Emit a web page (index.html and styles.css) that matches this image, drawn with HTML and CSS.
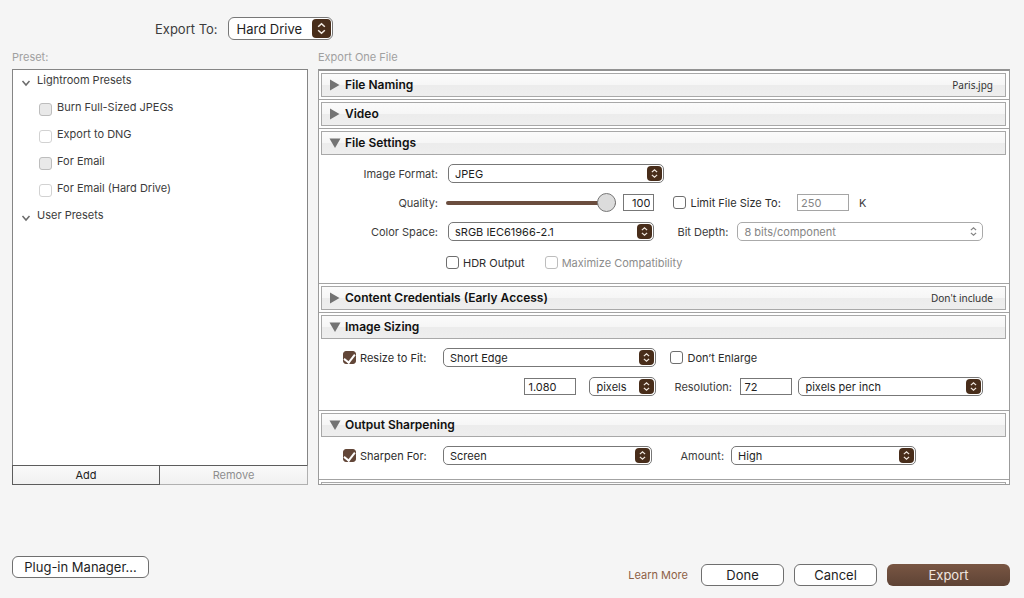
FILE: index.html
```html
<!DOCTYPE html>
<html lang="en">
<head>
<meta charset="utf-8">
<meta name="viewport" content="width=device-width, initial-scale=1">
<title>Export</title>
<link rel="stylesheet" href="styles.css">
</head>
<body>
<svg class="defs" aria-hidden="true">
  <symbol id="updown" viewBox="0 0 16 16"><path d="M5.200 6.500 8 4 10.800 6.500M5.200 9.500 8 12 10.800 9.500"/></symbol>
  <symbol id="closed" viewBox="0 0 12 12"><path d="M1 .5 10.500 6 1 11.500Z"/></symbol>
  <symbol id="open" viewBox="0 0 12 12"><path d="M.5 1.500H11.500L6 11Z"/></symbol>
  <symbol id="chevron" viewBox="0 0 10 8"><path d="M1.500 2 5 6 8.500 2"/></symbol>
</svg>
<form class="dialog">
  <div class="destination">
    <label for="export-to">Export To:</label>
    <span class="select large"><select id="export-to"><option>Hard Drive</option></select><svg><use href="#updown"/></svg></span>
  </div>

  <main class="columns">
    <section class="presets">
      <h2 class="caption">Preset:</h2>
      <div class="preset-box">
        <ul class="tree">
          <li><button type="button" class="group"><svg><use href="#chevron"/></svg>Lightroom Presets</button></li>
          <li class="preset"><input type="checkbox" id="burn" disabled><label for="burn">Burn Full-Sized JPEGs</label></li>
          <li class="preset"><input type="checkbox" id="dng"><label for="dng">Export to DNG</label></li>
          <li class="preset"><input type="checkbox" id="email" disabled><label for="email">For Email</label></li>
          <li class="preset"><input type="checkbox" id="email-hd"><label for="email-hd">For Email (Hard Drive)</label></li>
          <li><button type="button" class="group"><svg><use href="#chevron"/></svg>User Presets</button></li>
        </ul>
        <div class="preset-actions">
          <button type="button">Add</button>
          <button type="button" disabled>Remove</button>
        </div>
      </div>
    </section>

    <section class="settings">
      <h2 class="caption">Export One File</h2>
      <div class="panel">
        <section class="group-panel">
          <button type="button" class="heading"><svg><use href="#closed"/></svg><b>File Naming</b><span class="summary">Paris.jpg</span></button>
        </section>
        <section class="group-panel">
          <button type="button" class="heading"><svg><use href="#closed"/></svg><b>Video</b></button>
        </section>
        <section class="group-panel">
          <button type="button" class="heading"><svg><use href="#open"/></svg><b>File Settings</b></button>
          <div class="body file-settings">
            <div class="row">
              <div class="cell">
                <label class="name" for="format">Image Format:</label>
                <span class="select fill"><select id="format"><option>JPEG</option></select><svg><use href="#updown"/></svg></span>
              </div>
            </div>
            <div class="row">
              <div class="cell quality">
                <label class="name" for="quality">Quality:</label>
                <input type="range" id="quality" min="0" max="100" value="100">
                <input type="text" class="number" aria-label="Quality value" value="100">
              </div>
              <div class="cell">
                <span class="check"><input type="checkbox" id="limit"><label for="limit">Limit File Size To:</label></span>
                <input type="text" class="field limit-size" aria-label="Maximum file size" value="250" disabled>
                <span class="unit">K</span>
              </div>
            </div>
            <div class="row">
              <div class="cell inset">
                <label class="name" for="space">Color Space:</label>
                <span class="select fill"><select id="space"><option>sRGB IEC61966-2.1</option></select><svg><use href="#updown"/></svg></span>
              </div>
              <div class="cell">
                <label class="side-name" for="depth">Bit Depth:</label>
                <span class="select fill off"><select id="depth" disabled><option>8 bits/component</option></select><svg><use href="#updown"/></svg></span>
              </div>
            </div>
            <div class="row flags">
              <span class="check"><input type="checkbox" id="hdr"><label for="hdr">HDR Output</label></span>
              <span class="check"><input type="checkbox" id="compat" disabled><label for="compat">Maximize Compatibility</label></span>
            </div>
          </div>
        </section>
        <section class="group-panel">
          <button type="button" class="heading"><svg><use href="#closed"/></svg><b>Content Credentials (Early Access)</b><span class="summary">Don't include</span></button>
        </section>
        <section class="group-panel">
          <button type="button" class="heading"><svg><use href="#open"/></svg><b>Image Sizing</b></button>
          <div class="body sizing">
            <div class="row">
              <div class="cell">
                <span class="check lead"><input type="checkbox" id="resize" checked><label for="resize">Resize to Fit:</label></span>
                <span class="select fill"><select aria-label="Resize mode"><option>Short Edge</option></select><svg><use href="#updown"/></svg></span>
              </div>
              <div class="cell">
                <span class="check"><input type="checkbox" id="enlarge"><label for="enlarge">Don’t Enlarge</label></span>
              </div>
            </div>
            <div class="row">
              <div class="cell dimension">
                <input type="text" class="field" aria-label="Edge length" value="1.080">
                <span class="select units"><select aria-label="Edge units"><option>pixels</option></select><svg><use href="#updown"/></svg></span>
              </div>
              <div class="cell resolution">
                <label class="side-name" for="resolution">Resolution:</label>
                <input type="text" class="field" id="resolution" value="72">
                <span class="select fill"><select aria-label="Resolution units"><option>pixels per inch</option></select><svg><use href="#updown"/></svg></span>
              </div>
            </div>
          </div>
        </section>
        <section class="group-panel">
          <button type="button" class="heading"><svg><use href="#open"/></svg><b>Output Sharpening</b></button>
          <div class="body sizing">
            <div class="row">
              <div class="cell sharpen">
                <span class="check lead"><input type="checkbox" id="sharpen" checked><label for="sharpen">Sharpen For:</label></span>
                <span class="select fill"><select aria-label="Sharpen for"><option>Screen</option></select><svg><use href="#updown"/></svg></span>
              </div>
              <div class="cell amount">
                <label for="amount">Amount:</label>
                <span class="select fill"><select id="amount"><option>High</option></select><svg><use href="#updown"/></svg></span>
              </div>
            </div>
          </div>
        </section>
        <section class="group-panel">
          <button type="button" class="heading" aria-label="More settings"></button>
        </section>
      </div>
    </section>
  </main>

  <footer class="footer">
    <button type="button" class="push plugin">Plug-in Manager...</button>
    <div class="actions">
      <a href="#learn">Learn More</a>
      <button type="button" class="push">Done</button>
      <button type="button" class="push">Cancel</button>
      <button type="submit" class="push primary">Export</button>
    </div>
  </footer>
</form>
</body>
</html>
```
FILE: styles.css
```css
* { box-sizing: border-box; }

body {
  margin: 0;
  background: #f5f5f5;
  color: #3c3c3c;
  font: 11px/16px Inter, "Liberation Sans", sans-serif;
}

button, input, select { font: inherit; color: inherit; margin: 0; }
.defs { position: absolute; width: 0; height: 0; }

.dialog {
  display: flex;
  flex-direction: column;
  min-height: 100vh;
  padding: 17px 14px 12px 12px;
}

.destination {
  display: flex;
  align-items: center;
  gap: 10px;
  padding-left: 143px;
  font-size: 13px;
}

.columns {
  flex: 1;
  display: grid;
  grid-template-columns: 296fr 692fr;
  gap: 10px;
  padding-top: 9px;
}
.presets, .settings { display: flex; flex-direction: column; min-width: 0; }
.caption {
  margin: 0;
  padding-bottom: 4px;
  font-size: 11px;
  font-weight: 400;
  color: #a0a0a0;
}

/* Preset list */
.preset-box { flex: 1; display: flex; flex-direction: column; }
.tree {
  flex: 1;
  display: flex;
  flex-direction: column;
  gap: 7px;
  margin: 0;
  padding: 0;
  list-style: none;
  background: #fff;
  border: 1px solid #858585;
  border-bottom: 0;
}
.group {
  display: flex;
  align-items: center;
  gap: 6px;
  height: 20px;
  padding: 0 0 0 8px;
  border: 0;
  background: none;
}
.group svg {
  width: 10px;
  height: 13px;
  padding-top: 5px;
  fill: none;
  stroke: #6b6b6b;
  stroke-width: 1.500;
}
.preset { display: flex; align-items: center; gap: 5px; height: 20px; padding-left: 26px; }
.preset input[type="checkbox"] {
  margin-top: 5px;
  border: 1px solid #d2d2d2;
}
.preset input[type="checkbox"]:disabled { background: #e9e9e9; }
.preset-actions { display: grid; grid-template-columns: 1fr 1fr; }
.preset-actions button {
  height: 20px;
  padding: 0;
  border: 1px solid #5c5c5c;
  background: linear-gradient(#fafafa, #f1f1f1);
  color: #222;
}
.preset-actions button:disabled {
  border-color: #5c5c5c #b0b0b0 #b0b0b0;
  border-left: 0;
  color: #8e8e8e;
}

/* Settings panel */
.panel {
  flex: 1 1 0;
  overflow-y: auto;
  scrollbar-width: none;
  background: #fff;
  border: 1px solid #9b9b9b;
  border-top: 2px solid #929292;
}
.group-panel { padding: 2px 3px 2px 2px; border-bottom: 1px solid #a3a3a3; }
.heading {
  display: flex;
  align-items: center;
  width: 100%;
  height: 24px;
  padding: 0 12px 0 7px;
  gap: 4px;
  border: 1px solid #a8a8a8;
  background: linear-gradient(#fbfbfb, #f6f6f6 48%, #ececec 52%, #eee);
  color: #111;
}
.heading svg { width: 12px; height: 12px; fill: #737373; }
.heading b { font-size: 12px; font-weight: 600; }
.summary { margin-left: auto; font-family: "Noto Sans", sans-serif; font-size: 10px; color: #333; }

.body { padding: 4px 23px 0 1px; }
.row { display: grid; height: 29px; align-items: center; }
.file-settings { padding-bottom: 2px; }
.file-settings .row { grid-template-columns: 343fr 310fr; gap: 9px; }
.sizing { padding-bottom: 7px; }
.sizing .row { grid-template-columns: 335fr 313fr; gap: 14px; }
.cell { display: flex; align-items: center; min-width: 0; }
.name { flex: none; width: 116px; margin-right: 10px; text-align: right; }
.side-name { flex: none; width: 64px; padding-left: 4px; }
.fill { flex: 1; }
.inset, .quality { padding-right: 10px; }
.quality .name { margin-right: 8px; }
.file-settings .flags { display: flex; gap: 20px; height: 33px; padding-left: 124px; }
.check { display: inline-flex; align-items: center; gap: 4px; color: #2c2c2c; }
.lead { flex: none; width: 121px; padding-left: 21px; }
.dimension { justify-content: flex-end; gap: 13px; }
.units { width: 67px; }
.resolution { gap: 6px; }
.sharpen { padding-right: 4px; }
.amount { gap: 7px; padding: 0 67px 0 10px; }

/* Pop-up menus */
.select { position: relative; display: inline-flex; min-width: 0; color: #1e1e1e; }
.select select {
  appearance: none;
  width: 100%;
  height: 19px;
  padding: 0 20px 0 6px;
  border: 1px solid #777;
  border-radius: 5px;
  background: #fff;
  opacity: 1;
}
.select svg {
  position: absolute;
  top: 2px;
  right: 2px;
  width: 15px;
  height: 15px;
  border-radius: 4px;
  background: #482d1a;
  fill: none;
  stroke: #f4ece4;
  stroke-width: 1.300;
  pointer-events: none;
}
.off { color: #858585; }
.off select { border-color: #aaa; }
.off svg { background: none; stroke: #808080; }
.large select { height: 23px; width: 105px; padding: 0 24px 0 8px; border-radius: 6px; }
.large svg { width: 19px; height: 19px; }

/* Fields */
.field, .number {
  flex: none;
  width: 52px;
  height: 17px;
  padding: 0 3px;
  border: 1px solid #777;
  border-radius: 0;
  background: #fff;
  color: #222;
}
.field:disabled { border-color: #a5a5a5; color: #858585; }
.number { width: 31px; margin-left: 7px; text-align: right; }
.limit-size { margin-left: auto; }
.unit { width: 134px; padding-left: 10px; }

input[type="checkbox"] {
  appearance: none;
  flex: none;
  width: 13px;
  height: 13px;
  border: 1px solid #6e6e6e;
  border-radius: 3px;
  background: #fff;
}
input[type="checkbox"]:disabled { border-color: #bdbdbd; }
.check input:disabled + label { color: #8c8c8c; }
input[type="checkbox"]:checked {
  display: grid;
  place-items: center;
  padding-bottom: 2px;
  border-color: #624638;
  background: #624638;
}
input[type="checkbox"]:checked::after {
  content: "";
  width: 5px;
  height: 9px;
  border: solid #fff;
  border-width: 0 2px 2px 0;
  transform: rotate(38deg);
}

input[type="range"] {
  appearance: none;
  flex: 1;
  min-width: 0;
  height: 19px;
  background: none;
}
input[type="range"]::-webkit-slider-runnable-track {
  height: 4px;
  border-radius: 2px;
  background: #6b4d3e;
}
input[type="range"]::-webkit-slider-thumb {
  appearance: none;
  width: 19px;
  height: 19px;
  margin-top: -8px;
  border: 1px solid #777;
  border-radius: 50%;
  background: #dcdcdc;
}

/* Footer */
.footer { display: flex; justify-content: space-between; padding-top: 71px; }
.push {
  width: 83px;
  height: 22px;
  padding: 0;
  border: 1px solid #6f6f6f;
  border-radius: 6px;
  background: #fff;
  color: #1e1e1e;
  font-size: 13px;
}
.plugin { width: 137px; }
.actions { display: flex; align-items: center; gap: 10px; padding-top: 8px; }
.actions a { margin-right: 3px; color: #8d6145; text-decoration: none; }
.primary { width: 123px; border: 0; background: linear-gradient(#795643, #5e4335); color: #f0e6e0; }
```
